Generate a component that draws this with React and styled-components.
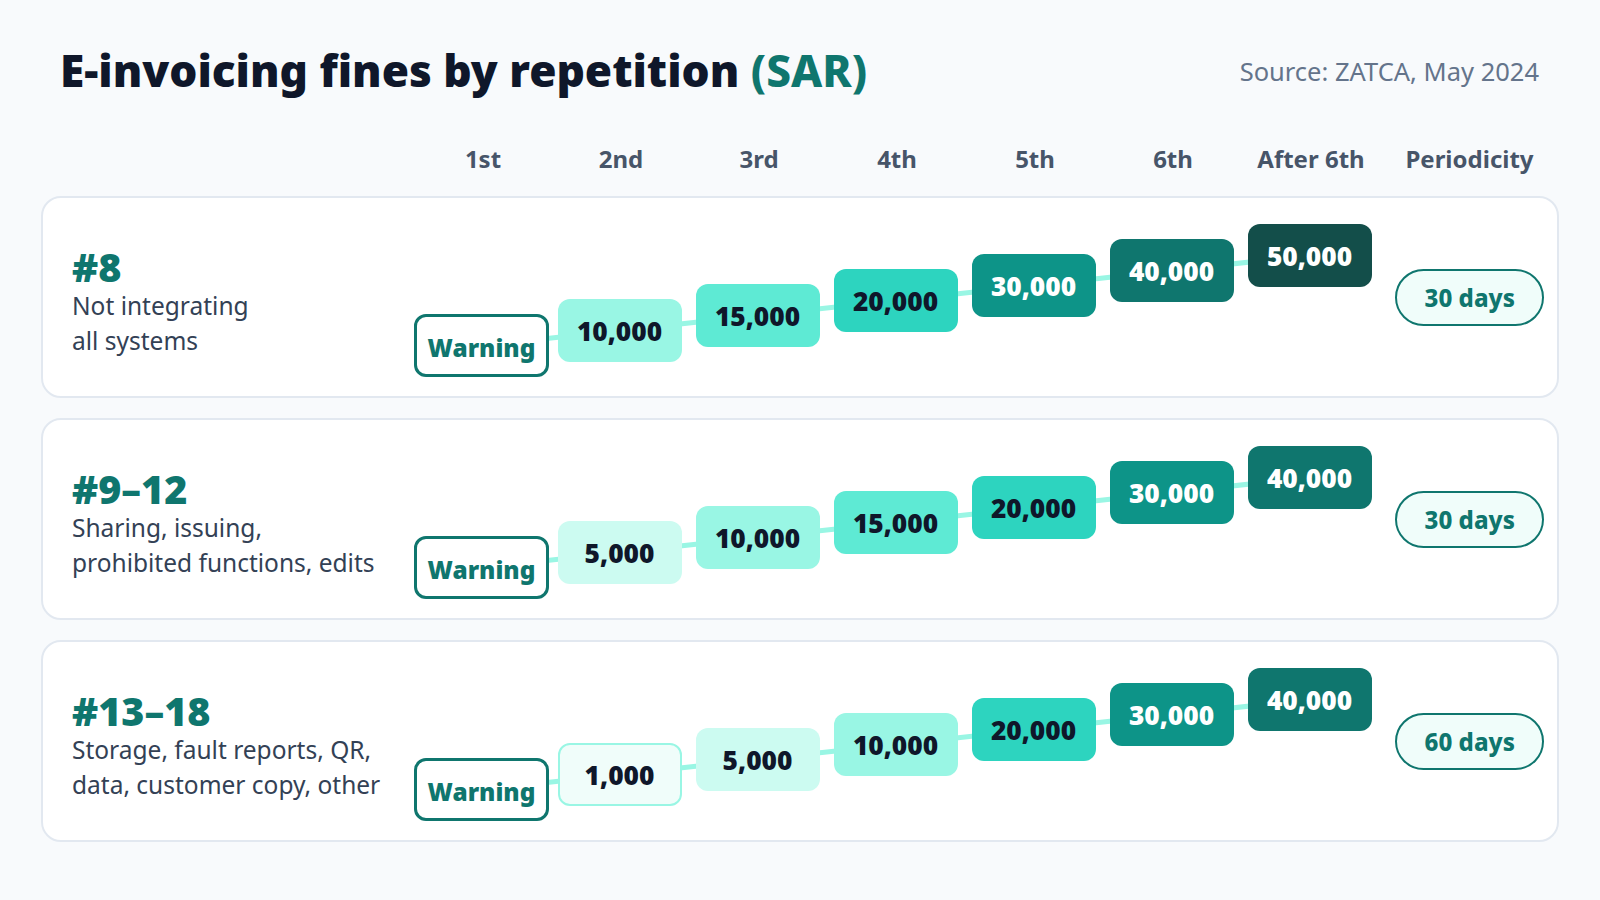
import React from "react";
import styled, { createGlobalStyle } from "styled-components";

const GlobalStyle = createGlobalStyle`
  body {
    margin: 0;
    background: #f8fafc;
    font-family: "Noto Sans", "Open Sans", sans-serif;
    color: #0f172a;
  }
`;

// one step = 138px wide, each repetition climbs 15px
const STEP = 138;
const RISE = 15;
const COLUMNS = `340.5px repeat(7, ${STEP}px) 1fr`;

const tones = {
  1000: { bg: "#f0fdfa", fg: "#0f172a", border: "#99f6e4" },
  5000: { bg: "#ccfbf1", fg: "#0f172a" },
  10000: { bg: "#99f6e4", fg: "#0f172a" },
  15000: { bg: "#5eead4", fg: "#0f172a" },
  20000: { bg: "#2dd4bf", fg: "#0f172a" },
  30000: { bg: "#0d9488", fg: "#ffffff" },
  40000: { bg: "#0f766e", fg: "#ffffff" },
  50000: { bg: "#134e4a", fg: "#ffffff" },
};

const rows = [
  {
    code: "#8",
    lines: ["Not integrating", "all systems"],
    fines: [10000, 15000, 20000, 30000, 40000, 50000],
    period: "30 days",
  },
  {
    code: "#9–12",
    lines: ["Sharing, issuing,", "prohibited functions, edits"],
    fines: [5000, 10000, 15000, 20000, 30000, 40000],
    period: "30 days",
  },
  {
    code: "#13–18",
    lines: ["Storage, fault reports, QR,", "data, customer copy, other"],
    fines: [1000, 5000, 10000, 20000, 30000, 40000],
    period: "60 days",
  },
];

const heads = ["1st", "2nd", "3rd", "4th", "5th", "6th", "After 6th", "Periodicity"];

const App = () => {
  return (
    <Page>
      <GlobalStyle />
      <Header>
        <Title>
          E-invoicing fines by repetition <Accent>(SAR)</Accent>
        </Title>
        <Source>Source: ZATCA, May 2024</Source>
      </Header>

      <HeadRow>
        <span />
        {heads.map((h) => (
          <Head key={h}>{h}</Head>
        ))}
      </HeadRow>

      <Cards>
        {rows.map((row) => {
          const steps = ["Warning", ...row.fines];
          return (
            <Card key={row.code}>
              <Label>
                <Code>{row.code}</Code>
                <Desc>
                  {row.lines[0]}
                  <br />
                  {row.lines[1]}
                </Desc>
              </Label>
              {steps.map((s, i) => (
                <Step key={i} $index={i} $last={i === steps.length - 1}>
                  {s === "Warning" ? (
                    <WarningChip>Warning</WarningChip>
                  ) : (
                    <Chip $tone={tones[s]}>{s.toLocaleString("en-US")}</Chip>
                  )}
                </Step>
              ))}
              <Period>{row.period}</Period>
            </Card>
          );
        })}
      </Cards>
    </Page>
  );
};

export default App;

const Page = styled.main`
  padding: 44px 41px 40px;
`;

const Header = styled.header`
  display: flex;
  justify-content: space-between;
  align-items: center;
  padding: 0 20px 0 19px;
`;

const Title = styled.h1`
  margin: 0;
  font-size: 44.2px;
  line-height: 53px;
  font-weight: 900;
  color: #0f172a;
`;

const Accent = styled.span`
  color: #0f766e;
  font-weight: 800;
`;

const Source = styled.div`
  font-size: 25.5px;
  color: #64748b;
`;

const HeadRow = styled.div`
  display: grid;
  grid-template-columns: ${COLUMNS};
  padding-left: 32.5px;
  margin: 47px 0 22px;
`;

const Head = styled.div`
  text-align: center;
  font-size: 24px;
  line-height: 30px;
  font-weight: 700;
  color: #475569;
`;

const Cards = styled.div`
  display: flex;
  flex-direction: column;
  gap: 20px;
`;

const Card = styled.section`
  display: grid;
  grid-template-columns: ${COLUMNS};
  box-sizing: border-box;
  height: 202px;
  padding-left: 29px;
  background: #ffffff;
  border: 2px solid #e2e8f0;
  border-radius: 20px;
`;

const Label = styled.div`
  align-self: center;
  padding-top: 10px;
`;

const Code = styled.div`
  font-size: 39.5px;
  line-height: 43px;
  font-weight: 900;
  color: #0f766e;
`;

const Desc = styled.div`
  font-size: 24.5px;
  line-height: 34.7px;
  color: #334155;
`;

const Step = styled.div`
  position: relative;
  align-self: end;
  justify-self: center;
  margin-bottom: ${(p) => 19 + p.$index * RISE}px;

  &::after {
    content: "";
    display: ${(p) => (p.$last ? "none" : "block")};
    position: absolute;
    left: 50%;
    top: 50%;
    width: ${Math.hypot(STEP, RISE)}px;
    height: 5px;
    margin-top: -2.5px;
    background: #99f6e4;
    transform-origin: 0 50%;
    transform: rotate(${-Math.atan2(RISE, STEP) * (180 / Math.PI)}deg);
    z-index: 0;
  }
`;

const Chip = styled.div`
  position: relative;
  z-index: 1;
  box-sizing: border-box;
  width: 124px;
  height: 63px;
  display: flex;
  align-items: center;
  justify-content: center;
  border-radius: 12px;
  background: ${(p) => p.$tone.bg};
  color: ${(p) => p.$tone.fg};
  border: ${(p) => (p.$tone.border ? `2px solid ${p.$tone.border}` : "none")};
  font-size: 26.3px;
  font-weight: 900;
`;

const WarningChip = styled(Chip).attrs({ $tone: { bg: "#ffffff", fg: "#0f766e", border: "#0f766e" } })`
  width: 135px;
  border: 3px solid #0f766e;
  font-size: 24.4px;
  font-weight: 900;
  padding-top: 4px;
`;

const Period = styled.div`
  align-self: center;
  justify-self: center;
  box-sizing: border-box;
  width: 149px;
  height: 57px;
  margin-left: 4px;
  display: flex;
  align-items: center;
  justify-content: center;
  border: 2.5px solid #0f766e;
  border-radius: 999px;
  background: #f0fdfa;
  color: #0f766e;
  font-size: 24px;
  font-weight: 800;
`;
